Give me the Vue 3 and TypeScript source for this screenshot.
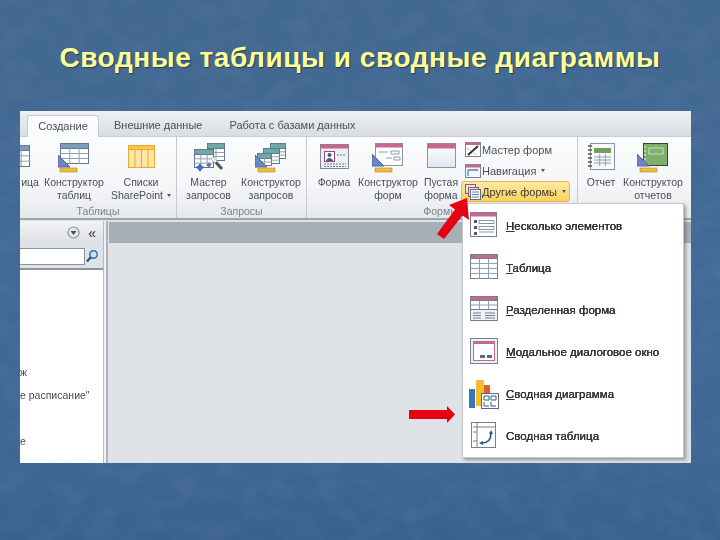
<script setup lang="ts">
type Btn = { w: number; icon: string; lines: string[]; caret?: boolean };
type Group = { w: number; label: string; buttons: Btn[] };

const grid = (x: number, y: number, w: number, h: number, cols: number, rows: number, c: string) => {
  let s = "";
  for (let i = 1; i < cols; i++) s += `<path d="M${x + (w * i) / cols} ${y}V${y + h}" stroke="${c}" fill="none"/>`;
  for (let i = 1; i < rows; i++) s += `<path d="M${x} ${y + (h * i) / rows}H${x + w}" stroke="${c}" fill="none"/>`;
  return s;
};
const tbl = (x: number, y: number, w: number, h: number, head: string, cols: number, rows: number, line = "#66778c", hh = 5) =>
  `<rect x="${x}.5" y="${y}.5" width="${w}" height="${h}" fill="#fff" stroke="${line}"/><rect x="${x}.5" y="${y}.5" width="${w}" height="${hh}" fill="${head}" stroke="${line}"/>` +
  grid(x + 0.5, y + hh + 0.5, w, h - hh, cols, rows, "#8fa0b3");
const tri = (x: number, y: number) => `<path d="M${x} ${y}V${y + 12}H${x + 12}Z" fill="#6c86c8" stroke="#4d66a6"/>`;
const ruler = (x: number, y: number, w: number) =>
  `<rect x="${x}" y="${y}" width="${w}" height="4" fill="#eebb44" stroke="#b98a22" stroke-width=".6"/>`;
const wand = `<path d="M19 16l10 11" stroke="#555" stroke-width="3"/><path d="M19 16l4 4" stroke="#eee" stroke-width="3"/>`;
const stars = `<path d="M5 24l2-3 2 3 3 1-3 2-2 3-2-3-3-2zM15 22l1-2 1 2 2 1-2 1-1 2-1-2-2-1z" fill="#4a68b8"/>`;

const icons: Record<string, string> = {
  partial: tbl(-12, 3, 28, 21, "#7d9cc0", 3, 3),
  tableDesign: tbl(2, 1, 28, 20, "#7d9cc0", 3, 3) + tri(0, 13) + ruler(2, 26, 17),
  list: `<rect x="3.5" y="3.5" width="26" height="22" fill="#fde6a6" stroke="#e8a92c"/><rect x="3.5" y="3.5" width="26" height="4" fill="#f6c552" stroke="#e8a92c"/><path d="M10 8v17M16.500 8v17M23 8v17" stroke="#e8a92c"/>`,
  queryWizard: tbl(14, 1, 17, 17, "#6fa8a8", 2, 3) + tbl(1, 7, 19, 18, "#6fa8a8", 3, 3) + stars + wand,
  queryDesign: tbl(15, 1, 15, 15, "#6fa8a8", 2, 3) + tbl(8, 6, 16, 15, "#6fa8a8", 2, 3) + tbl(2, 11, 14, 12, "#6fa8a8", 2, 2) + tri(0, 13) + ruler(3, 26, 17),
  form: `<rect x="2.500" y="2.500" width="28" height="24" fill="#eef0f4" stroke="#7d8796"/><rect x="2.500" y="2.500" width="28" height="4" fill="#c4688c"/><rect x="6.500" y="9.500" width="10" height="10" fill="#fff" stroke="#a0457a"/><circle cx="11.500" cy="13" r="2" fill="#3c5a8c"/><path d="M8 19c1-4 6-4 7 0z" fill="#3c5a8c"/><path d="M19 13h9M6 22h22M6 24.500h22" stroke="#6c7a8c" stroke-dasharray="2 1"/>`,
  formDesign: `<rect x="3.500" y="1.500" width="27" height="22" fill="#fff" stroke="#8b93a0"/><rect x="3.500" y="1.500" width="27" height="4" fill="#c4688c"/><path d="M7 10h9M19 9h8v3h-8zM14 16h6M22 15h6v3h-6z" stroke="#8ba0b8" fill="none"/>` + tri(0, 12) + ruler(3, 26, 17),
  blank: `<defs><linearGradient id="bg1" x1="0" y1="0" x2="0" y2="1"><stop offset="0" stop-color="#fff"/><stop offset="1" stop-color="#dfe6f2"/></linearGradient></defs><rect x="2.500" y="1.500" width="28" height="24" fill="url(#bg1)" stroke="#8b93a0"/><rect x="2.500" y="1.500" width="28" height="5" fill="#c4688c"/>`,
  report: `<rect x="5.500" y="1.500" width="24" height="26" fill="#f7f9fb" stroke="#8b93a0"/><rect x="9" y="6" width="17" height="5" fill="#6fa05a"/>` + grid(9, 12, 17, 12, 3, 4, "#8fa0b3") + `<path d="M3 4h4M3 8h4M3 12h4M3 16h4M3 20h4M3 24h4" stroke="#555" stroke-width="1.300"/>`,
  reportDesign: `<rect x="6.500" y="1.500" width="24" height="22" fill="#7fae68" stroke="#33482c"/><rect x="12" y="6" width="14" height="6" fill="none" stroke="#cfe2c4"/><path d="M8 4v18" stroke="#fff" stroke-dasharray="2 2"/>` + tri(0, 12) + ruler(3, 26, 17),
  sWizard: `<rect x=".500" y=".500" width="15" height="14" fill="#fff" stroke="#7b8494"/><rect x=".500" y=".500" width="15" height="2.500" fill="#c4688c"/><path d="M3 13L13 4" stroke="#333" stroke-width="2"/><path d="M2 6l3 3M9 11l3 2" stroke="#777" stroke-dasharray="1 1"/>`,
  sNav: `<rect x=".500" y="1.500" width="15" height="13" fill="#f4f7fb" stroke="#7b8494"/><rect x=".500" y="1.500" width="15" height="3" fill="#c4688c"/><path d="M3 7h10M3 7v6" stroke="#5580b8" stroke-width="1.300"/>`,
  sOther: `<rect x=".500" y=".500" width="10" height="9" fill="#efe0e6" stroke="#8a5a70"/><rect x="3.500" y="3.500" width="10" height="9" fill="#efe0e6" stroke="#8a5a70"/><rect x="5.500" y="5.500" width="10" height="10" fill="#fff" stroke="#5c6a7c"/><path d="M7 8h7M7 10.500h7M7 13h7" stroke="#5a7fb0"/>`,
  mMulti: `<rect x="1.500" y="1.500" width="26" height="24" fill="#fff" stroke="#75808f"/><rect x="1.500" y="1.500" width="26" height="4" fill="#c4688c"/><path d="M5 9h3v3H5zM5 15h3v3H5zM5 21h3v3H5z" fill="#556"/><path d="M10 9.500h15v3H10zM10 15.500h15v3H10zM10 21h15" stroke="#8797aa" fill="none"/>`,
  mTable: tbl(1, 1, 27, 24, "#c4688c", 3, 4, "#75808f", 4),
  mSplit: tbl(1, 1, 27, 13, "#c4688c", 3, 2, "#75808f", 4) + `<rect x="1.500" y="14.500" width="27" height="11" fill="#eef1f6" stroke="#75808f"/><path d="M4 18h8M4 20.500h8M4 23h8M16 18h10M16 20.500h10M16 23h10" stroke="#75808f"/>`,
  mModal: `<rect x="1.500" y="1.500" width="27" height="25" fill="#eef0f5" stroke="#75808f"/><rect x="4.500" y="6.500" width="21" height="17" fill="#fff" stroke="#c4688c"/><path d="M4 5h22" stroke="#c4688c" stroke-width="2"/><path d="M11 18h5v3h-5zM18 18h5v3h-5z" fill="#5a6c84"/>`,
  mChart: `<rect x="0" y="10" width="6" height="19" fill="#3c75b8"/><rect x="7" y="1" width="8" height="26" fill="#f2bd2e"/><rect x="15" y="6" width="6" height="10" fill="#d9602a"/><rect x="12.500" y="14.500" width="17" height="15" fill="#fff" stroke="#5c6a7c"/><path d="M15 17h5v4h-5zM22 17h5v4h-5zM15 23v4h5M22 23v4h5" stroke="#3c5a8c" fill="none"/>`,
  mPivot: `<rect x="2.500" y="1.500" width="24" height="25" fill="#fff" stroke="#75808f"/><path d="M8 2v24M8 6h18M4 6h4M4 11h4M4 20h4" stroke="#75808f"/><path d="M13 22c6 0 9-4 9-10" fill="none" stroke="#22558c" stroke-width="1.500"/><path d="M20 13l2-4 2 4zM14 20l-4 2 4 2z" fill="#22558c"/>`,
};

const groups: Group[] = [
  {
    w: 157,
    label: "Таблицы",
    buttons: [
      { w: 20, icon: "partial", lines: ["ица"] },
      { w: 68, icon: "tableDesign", lines: ["Конструктор", "таблиц"] },
      { w: 66, icon: "list", lines: ["Списки", "SharePoint"], caret: true },
    ],
  },
  {
    w: 130,
    label: "Запросы",
    buttons: [
      { w: 63, icon: "queryWizard", lines: ["Мастер", "запросов"] },
      { w: 62, icon: "queryDesign", lines: ["Конструктор", "запросов"] },
    ],
  },
];
const formButtons: Btn[] = [
  { w: 46, icon: "form", lines: ["Форма"] },
  { w: 62, icon: "formDesign", lines: ["Конструктор", "форм"] },
  { w: 44, icon: "blank", lines: ["Пустая", "форма"] },
];
const stack = [
  { icon: "sWizard", text: "Мастер форм" },
  { icon: "sNav", text: "Навигация", caret: true },
  { icon: "sOther", text: "Другие формы", caret: true, active: true },
];
const reportButtons: Btn[] = [
  { w: 42, icon: "report", lines: ["Отчет"] },
  { w: 62, icon: "reportDesign", lines: ["Конструктор", "отчетов"] },
];
const menu = [
  { icon: "mMulti", u: "Н", text: "есколько элементов" },
  { icon: "mTable", u: "Т", text: "аблица" },
  { icon: "mSplit", u: "Р", text: "азделенная форма" },
  { icon: "mModal", u: "М", text: "одальное диалоговое окно" },
  { icon: "mChart", u: "С", text: "водная диаграмма" },
  { icon: "mPivot", u: "", text: "Сводная таблица" },
];
const navItems = ["ж", "е расписание\"", "е"];
</script>

<template>
  <div class="slide">
    <svg class="texture" width="720" height="540" aria-hidden="true">
      <filter id="mottle">
        <feTurbulence type="fractalNoise" baseFrequency="0.035 0.05" numOctaves="4" seed="7" />
        <feColorMatrix values="0 0 0 0 1  0 0 0 0 1  0 0 0 0 1  0.9 0 0 0 -0.33" />
      </filter>
      <rect width="720" height="540" filter="url(#mottle)" />
    </svg>
    <h1 class="title">Сводные таблицы и сводные диаграммы</h1>
    <div class="shot">
      <div class="tabs">
        <span class="tab active">Создание</span>
        <span class="tab t2">Внешние данные</span>
        <span class="tab t3">Работа с базами данных</span>
      </div>
      <div class="ribbon">
        <section v-for="g in groups" :key="g.label" class="group" :style="{ width: g.w + 'px' }">
          <div class="row">
            <div v-for="b in g.buttons" :key="b.icon" class="btn" :style="{ width: b.w + 'px' }">
              <svg class="big" viewBox="0 0 32 32" v-html="icons[b.icon]"></svg>
              <span v-for="(l, i) in b.lines" :key="i" class="line">{{ l }}<i v-if="b.caret && i === b.lines.length - 1" class="caret"></i></span>
            </div>
          </div>
          <div class="glabel">{{ g.label }}</div>
        </section>
        <section class="group forms">
          <div class="row">
            <div v-for="b in formButtons" :key="b.icon" class="btn" :style="{ width: b.w + 'px' }">
              <svg class="big" viewBox="0 0 32 32" v-html="icons[b.icon]"></svg>
              <span v-for="(l, i) in b.lines" :key="i" class="line">{{ l }}</span>
            </div>
            <div class="stack">
              <div v-for="s in stack" :key="s.icon" class="sitem" :class="{ active: s.active }">
                <svg class="small" viewBox="0 0 16 16" v-html="icons[s.icon]"></svg>
                <span>{{ s.text }}</span><i v-if="s.caret" class="caret"></i>
              </div>
            </div>
          </div>
          <div class="glabel">Формы</div>
        </section>
        <section class="group reports">
          <div class="row">
            <div v-for="b in reportButtons" :key="b.icon" class="btn" :style="{ width: b.w + 'px' }">
              <svg class="big" viewBox="0 0 32 32" v-html="icons[b.icon]"></svg>
              <span v-for="(l, i) in b.lines" :key="i" class="line">{{ l }}</span>
            </div>
          </div>
        </section>
      </div>
      <div class="body">
        <aside class="nav">
          <div class="navhead">
            <svg width="13" height="13" viewBox="0 0 13 13">
              <circle cx="6.500" cy="6.500" r="5.500" fill="#e6e8ea" stroke="#8f959c" stroke-width="1.200" />
              <path d="M3.500 5h6l-3 4z" fill="#4a4f55" />
            </svg>
            <span class="collapse">«</span>
          </div>
          <div class="search">
            <div class="input"></div>
            <svg width="14" height="14" viewBox="0 0 14 14">
              <circle cx="8.500" cy="5.500" r="3.700" fill="#cfe3f6" stroke="#2f6fb0" stroke-width="1.500" />
              <path d="M6 8l-4 4.500" stroke="#1f4f86" stroke-width="2.200" />
            </svg>
          </div>
          <ul class="list">
            <li v-for="n in navItems" :key="n">{{ n }}</li>
          </ul>
        </aside>
        <div class="work"><div class="workbar"></div></div>
      </div>
      <div class="menu">
        <div v-for="m in menu" :key="m.icon" class="mitem">
          <svg class="micon" viewBox="0 0 30 30" v-html="icons[m.icon]"></svg>
          <span><u v-if="m.u">{{ m.u }}</u>{{ m.text }}</span>
        </div>
      </div>
      <svg class="arrow a1" width="40" height="48" viewBox="0 0 40 48">
        <path d="M33 2L35 24L28.500 19.500L10 43L3 38L21 13.500L15 9Z" fill="#e60012" />
      </svg>
      <svg class="arrow a2" width="48" height="18" viewBox="0 0 48 18">
        <path d="M1 4H39V0L47 8.500L39 17V13H1Z" fill="#e60012" />
      </svg>
    </div>
  </div>
</template>

<style scoped>
.slide {
  position: relative;
  width: 720px;
  height: 540px;
  overflow: hidden;
  background: linear-gradient(180deg, #41688f 0%, #426a98 50%, #3f6694 85%, #3b628f 100%);
  font-family: "Liberation Sans", Arial, sans-serif;
}
.texture {
  position: absolute;
  left: 0;
  top: 0;
  opacity: 0.09;
}
.title {
  position: relative;
  margin: 0;
  padding-top: 41px;
  height: 70px;
  box-sizing: border-box;
  text-align: center;
  font-size: 28px;
  line-height: 34px;
  letter-spacing: 0.55px;
  font-weight: 700;
  color: #ffff99;
  text-shadow: 1px 1px 1px #2a3f5a;
  white-space: nowrap;
}
.shot {
  position: relative;
  margin: 41px 0 0 20px;
  width: 671px;
  height: 352px;
  overflow: hidden;
  background: #dfe3e8;
  display: flex;
  flex-direction: column;
  color: #4a5058;
  font-size: 10.5px;
}
.shot span,
.shot li,
.glabel {
  filter: blur(0.35px);
}
.tabs {
  height: 26px;
  flex: none;
  display: flex;
  align-items: flex-end;
  padding-left: 7px;
  box-sizing: border-box;
  background: linear-gradient(180deg, #eef0f2, #d9dde2);
  border-bottom: 1px solid #c9ced4;
  font-size: 11px;
}
.tab {
  height: 21px;
  line-height: 20px;
  text-align: center;
}
.tab.active {
  width: 72px;
  background: #fafbfc;
  border: 1px solid #c9ced4;
  border-bottom: none;
  border-radius: 3px 3px 0 0;
  box-sizing: border-box;
  margin-bottom: -1px;
  height: 22px;
}
.t2 {
  margin-left: 15px;
}
.t3 {
  margin-left: 27px;
}
.ribbon {
  height: 83px;
  flex: none;
  display: flex;
  background: linear-gradient(180deg, #fbfcfc 0%, #f4f6f7 60%, #e6e9ec 100%);
  border-bottom: 2px solid #9ea4ab;
  box-sizing: border-box;
}
.group {
  flex: none;
  display: flex;
  flex-direction: column;
  box-sizing: border-box;
  border-right: 1px solid #c6cbd1;
}
.forms {
  width: 271px;
  padding: 0 7px 0 4px;
}
.reports {
  width: 113px;
  border-right: none;
  padding-left: 2px;
}
.row {
  flex: 1;
  display: flex;
}
.btn {
  flex: none;
  display: flex;
  flex-direction: column;
  align-items: center;
  padding-top: 5px;
  white-space: nowrap;
  overflow: hidden;
}
.big {
  width: 32px;
  height: 32px;
  margin-bottom: 2px;
  flex: none;
}
.line {
  line-height: 13px;
}
.glabel {
  height: 15px;
  line-height: 16px;
  text-align: center;
  color: #7b828b;
}
.caret {
  display: inline-block;
  width: 0;
  height: 0;
  margin-left: 4px;
  vertical-align: 2px;
  border: 2.500px solid transparent;
  border-top: 3px solid #555;
  border-bottom: none;
}
.stack {
  display: flex;
  flex-direction: column;
  padding-top: 2px;
  width: 110px;
  flex: none;
  margin-left: -2px;
  font-size: 11px;
}
.sitem {
  height: 21px;
  display: flex;
  align-items: center;
  gap: 1px;
  padding-left: 3px;
  box-sizing: border-box;
  white-space: nowrap;
  width: 109px;
  border: 1px solid transparent;
  flex: none;
}
.sitem.active {
  background: linear-gradient(180deg, #fde9a4, #fbd25f);
  border-color: #e7b64a;
  border-radius: 3px;
  color: #3c3a30;
}
.small {
  width: 16px;
  height: 16px;
  flex: none;
}
.body {
  flex: 1;
  display: flex;
  min-height: 0;
}
.nav {
  width: 83px;
  flex: none;
  background: #fff;
  border-right: 1px solid #b7bcc3;
  box-shadow: 2px 0 0 #eef0f2, 4px 0 0 #aeb3ba;
  display: flex;
  flex-direction: column;
  margin-top: 1px;
}
.navhead {
  height: 23px;
  flex: none;
  background: linear-gradient(180deg, #f0f2f3, #dde0e4);
  display: flex;
  align-items: center;
  justify-content: flex-end;
  gap: 8px;
  padding-right: 7px;
}
.collapse {
  font-size: 14px;
  color: #333;
  line-height: 14px;
}
.search {
  height: 26px;
  flex: none;
  display: flex;
  align-items: center;
  gap: 0;
  background: #dfe3e7;
  border-bottom: 2px solid #8d939a;
  box-sizing: border-box;
}
.input {
  width: 65px;
  height: 17px;
  background: #fff;
  border: 1px solid #8d939a;
  border-left: none;
  box-sizing: border-box;
}
.list {
  list-style: none;
  margin: 0;
  padding: 95px 0 0;
  font-size: 10.5px;
  color: #45494f;
  white-space: nowrap;
}
.list li {
  height: 23px;
  line-height: 14px;
}
.list li:last-child {
  margin-top: 23px;
}
.work {
  flex: 1;
  margin-left: 5px;
  background: #dfe3e8;
}
.workbar {
  height: 21px;
  margin-top: 2px;
  background: #a8afb6;
}
.menu {
  position: absolute;
  left: 442px;
  top: 92px;
  width: 222px;
  height: 255px;
  box-sizing: border-box;
  background: #fff;
  border: 1px solid #c5c9ce;
  box-shadow: 2px 2px 3px rgba(60, 60, 60, 0.45);
  padding-top: 1px;
  display: flex;
  flex-direction: column;
  color: #2e3238;
}
.mitem {
  height: 42px;
  flex: none;
  display: flex;
  align-items: center;
  padding-left: 6px;
  gap: 7px;
  font-size: 11.5px;
  white-space: nowrap;
}
.mitem span {
  color: #33373d;
  text-shadow: 0 0 0.6px #33373d, 0 0 0.6px #33373d;
}
.micon {
  width: 30px;
  height: 30px;
  flex: none;
}
.arrow {
  position: absolute;
}
.a1 {
  left: 414px;
  top: 85px;
}
.a2 {
  left: 388px;
  top: 295px;
}
</style>
